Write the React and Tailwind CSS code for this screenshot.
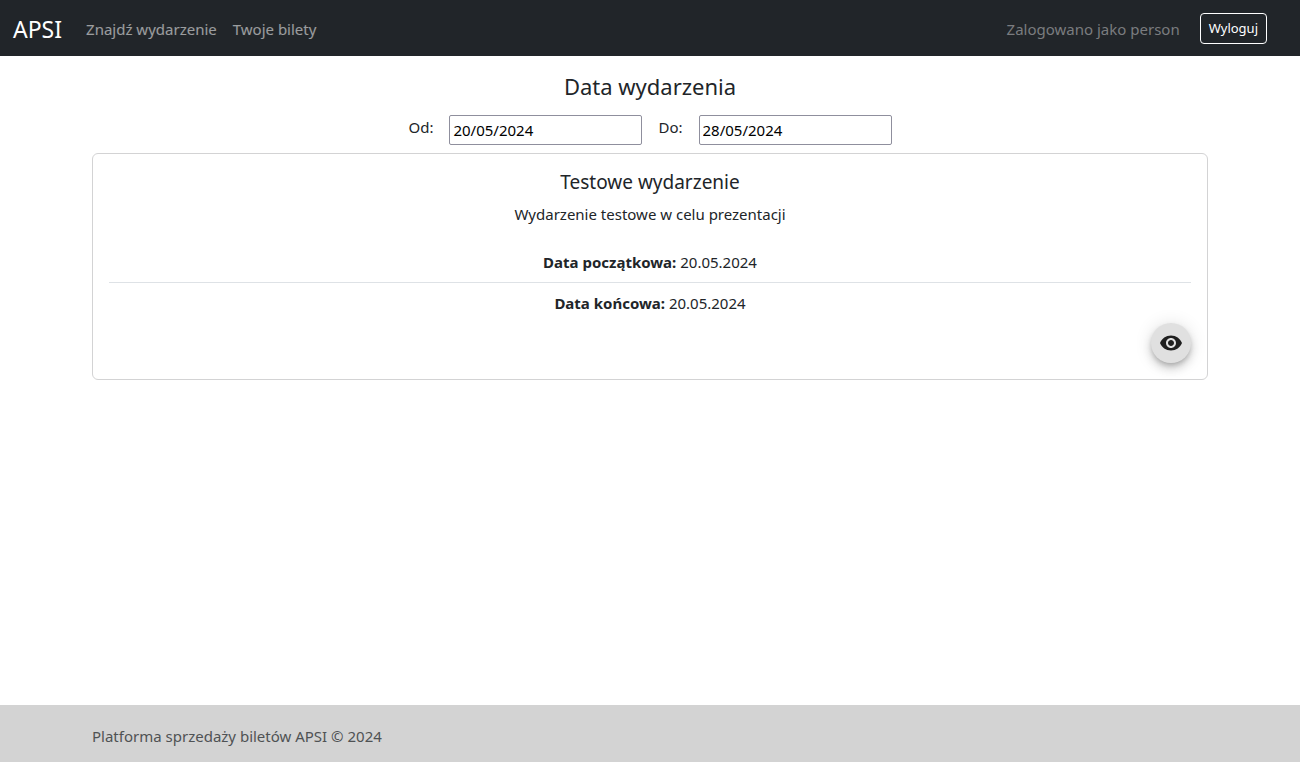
import { MdVisibility } from "react-icons/md";

function Navbar() {
  return (
    <nav className="flex h-14 items-center bg-[#212529] pt-px pr-[33px] pl-[13px]">
      <a href="#" className="mr-4 text-[23px] leading-9 text-white">APSI</a>
      <a href="#szukaj" className="px-2 pt-[9px] pb-2 text-white/55">Znajdź wydarzenie</a>
      <a href="#bilety" className="px-2 pt-[9px] pb-2 text-white/55">Twoje bilety</a>
      <span className="mr-5 ml-auto pt-[9px] pb-2 text-[#7a7c7f]">Zalogowano jako person</span>
      <button type="button" className="rounded border border-white px-2 py-1 text-[13px] leading-[21px] text-white">Wyloguj</button>
    </nav>
  );
}

function DateField({ id, label, value }) {
  return (
    <div className="flex gap-4">
      <label htmlFor={id}>{label}</label>
      <input id={id} type="text" defaultValue={value} className="h-[30px] w-[193px] rounded-[2px] border border-[#8f8f9d] bg-white px-[3px] text-black" />
    </div>
  );
}

function EventCard() {
  return (
    <article className="mt-2 rounded-md border border-[#d3d3d4] p-4 text-center">
      <h2 className="mb-[7px] text-[19px] leading-[25px]">Testowe wydarzenie</h2>
      <p className="mb-6">Wydarzenie testowe w celu prezentacji</p>
      <p className="border-b border-[#dee2e6] pb-2"><strong>Data początkowa:</strong> 20.05.2024</p>
      <p className="pt-2"><strong>Data końcowa:</strong> 20.05.2024</p>
      <div className="mt-2 flex justify-end">
        <button type="button" aria-label="Podgląd" className="flex size-10 items-center justify-center rounded-full bg-[#e0e0e0] text-[#1f1f1f] shadow-[0_3px_5px_-1px_rgba(0,0,0,0.2),0_6px_10px_0_rgba(0,0,0,0.14),0_1px_18px_0_rgba(0,0,0,0.12)]">
          <MdVisibility size={24} />
        </button>
      </div>
    </article>
  );
}

export default function App() {
  return (
    <div className="flex min-h-screen flex-col bg-white font-['Noto_Sans',sans-serif] text-[15px] leading-6 text-[#212529]">
      <Navbar />
      <main className="mx-auto w-full max-w-[1140px] px-3 pt-4">
        <h1 className="mb-[15px] text-center text-[22px] leading-7">Data wydarzenia</h1>
        <div className="flex flex-wrap justify-center gap-4">
          <DateField id="od" label="Od:" value="20/05/2024" />
          <DateField id="do" label="Do:" value="28/05/2024" />
        </div>
        <EventCard />
      </main>
      <footer className="mt-auto bg-[#d3d3d3] pt-[19px] pb-[14px]">
        <p className="mx-auto max-w-[1140px] px-3 text-[#4f5254]">Platforma sprzedaży biletów APSI © 2024</p>
      </footer>
    </div>
  );
}
